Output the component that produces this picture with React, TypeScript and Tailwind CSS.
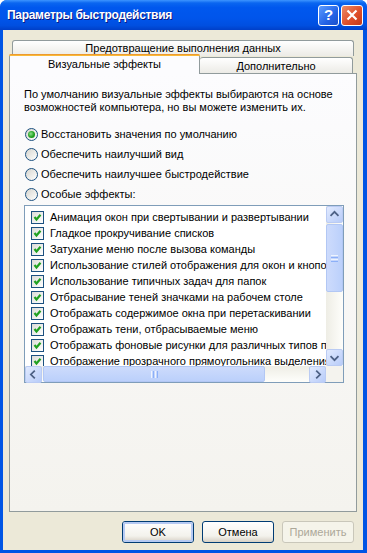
import React from 'react';

const items = [
  'Анимация окон при свертывании и развертывании',
  'Гладкое прокручивание списков',
  'Затухание меню после вызова команды',
  'Использование стилей отображения для окон и кнопок',
  'Использование типичных задач для папок',
  'Отбрасывание теней значками на рабочем столе',
  'Отображать содержимое окна при перетаскивании',
  'Отображать тени, отбрасываемые меню',
  'Отображать фоновые рисунки для различных типов папок',
  'Отображение прозрачного прямоугольника выделения',
];

const radios = [
  { label: 'Восстановить значения по умолчанию', checked: true },
  { label: 'Обеспечить наилучший вид', checked: false },
  { label: 'Обеспечить наилучшее быстродействие', checked: false },
  { label: 'Особые эффекты:', checked: false },
];

const CheckBox = () => (
  <span className="w-[13px] h-[13px] shrink-0 border border-[#1C5180] bg-[linear-gradient(135deg,#DCDCD7,#FFFFFF)] flex items-center justify-center">
    <svg width="11" height="11" viewBox="0 0 11 11">
      <path d="M2.5 5 L4.5 7.5 L8.5 2.8" stroke="#21A121" strokeWidth="2.2" fill="none" />
    </svg>
  </span>
);

const Radio = ({ checked }: { checked: boolean }) => (
  <span className="w-[13px] h-[13px] shrink-0 rounded-full border border-[#1C5180] bg-[linear-gradient(135deg,#D6D5CE,#FFFFFF)] flex items-center justify-center">
    {checked && (
      <span className="w-[7px] h-[7px] rounded-full bg-[radial-gradient(circle_at_40%_40%,#8BE08B,#21A121_55%,#1B8A1B)]" />
    )}
  </span>
);

const Chevron = ({ dir }: { dir: 'up' | 'down' | 'left' | 'right' }) => {
  const d = {
    up: 'M4 10 L8.5 5.5 L13 10',
    down: 'M4 7 L8.5 11.5 L13 7',
    left: 'M10 4 L5.5 8.5 L10 13',
    right: 'M7 4 L11.5 8.5 L7 13',
  }[dir];
  return (
    <svg width="17" height="17" viewBox="0 0 17 17">
      <path d={d} stroke="#4D6185" strokeWidth="2" fill="none" />
    </svg>
  );
};

const ArrowBtn = ({ dir }: { dir: 'up' | 'down' | 'left' | 'right' }) => (
  <div className="w-[17px] h-[17px] shrink-0 rounded-[2px] border border-[#BACBF3] bg-[linear-gradient(135deg,#E1EAFE,#B8CCF9)] flex items-center justify-center overflow-hidden">
    <Chevron dir={dir} />
  </div>
);

const VScroll = () => (
  <div className="w-[17px] flex flex-col bg-[linear-gradient(90deg,#EEEDE5,#FEFEFB)]">
    <ArrowBtn dir="up" />
    <div className="flex-1 pt-[1px]">
      <div className="h-[68px] rounded-[2px] border border-[#B2C7F4] bg-[linear-gradient(90deg,#CDDBFC,#BBD0FB)] flex flex-col items-center justify-center gap-[1px]">
        <span className="w-[7px] h-[1px] bg-[#EEF4FE]" />
        <span className="w-[7px] h-[1px] bg-[#8CB0F8]" />
        <span className="w-[7px] h-[1px] bg-[#EEF4FE]" />
        <span className="w-[7px] h-[1px] bg-[#8CB0F8]" />
      </div>
    </div>
    <ArrowBtn dir="down" />
  </div>
);

const HScroll = () => (
  <div className="flex-1 flex bg-[linear-gradient(180deg,#EEEDE5,#FEFEFB)]">
    <ArrowBtn dir="left" />
    <div className="flex-1 pl-[1px]">
      <div className="w-[222px] h-[16px] rounded-[2px] border border-[#B2C7F4] bg-[linear-gradient(180deg,#CDDBFC,#BBD0FB)] flex items-center justify-center gap-[1px]">
        <span className="h-[7px] w-[1px] bg-[#EEF4FE]" />
        <span className="h-[7px] w-[1px] bg-[#8CB0F8]" />
        <span className="h-[7px] w-[1px] bg-[#EEF4FE]" />
        <span className="h-[7px] w-[1px] bg-[#8CB0F8]" />
      </div>
    </div>
    <ArrowBtn dir="right" />
  </div>
);

const Button = ({ label, primary, disabled }: { label: string; primary?: boolean; disabled?: boolean }) =>
  disabled ? (
    <div className="w-[72px] h-[22px] rounded-[3px] border border-[#C9C7BA] bg-[#F5F4EA] flex items-center justify-center text-[#ACA899]">
      {label}
    </div>
  ) : (
    <div className="w-[72px] h-[22px] rounded-[3px] border border-[#003C74] bg-[linear-gradient(180deg,#FFFFFF,#F3F2EC_70%,#D6D0C5)] flex items-center justify-center">
      <div className={`w-full h-full rounded-[2px] flex items-center justify-center ${primary ? 'border-2 border-[#B6CAF3]' : ''}`}>
        {label}
      </div>
    </div>
  );

export default function App() {
  return (
    <div className="w-[367px] h-[553px] flex flex-col bg-[#0055E5] rounded-t-[7px] overflow-hidden font-['Liberation_Sans',Arial,sans-serif] text-[11px] text-black">
      {/* title bar */}
      <div className="h-[30px] shrink-0 flex items-center pl-[7px] pr-[4px] bg-[linear-gradient(180deg,#3D95FF_0%,#0A66F0_10%,#0058EE_25%,#0055EB_60%,#004FE0_85%,#003FC8_100%)]">
        <span className="flex-1 text-white font-bold text-[12px] tracking-[-0.3px] [text-shadow:1px_1px_#0A1883]">Параметры быстродействия</span>
        <div className="w-[21px] h-[21px] rounded-[3px] border border-white bg-[linear-gradient(135deg,#5C9CFF,#2463E6_60%,#1A4FCB)] flex items-center justify-center text-white font-bold text-[15px]">
          ?
        </div>
        <div className="ml-[2px] w-[22px] h-[21px] rounded-[3px] border border-white bg-[linear-gradient(135deg,#EA8C6A,#E0502B_55%,#C3391B)] flex items-center justify-center">
          <svg width="12" height="12" viewBox="0 0 12 12">
            <path d="M1.5 1.5 L10.5 10.5 M10.5 1.5 L1.5 10.5" stroke="white" strokeWidth="2.2" />
          </svg>
        </div>
      </div>

      {/* body */}
      <div className="ml-[3px] mr-[4px] mb-[3px] flex-1 bg-[#ECE9D8] flex flex-col pt-[10px]">
        <div className="ml-[6px] w-[348px] flex flex-col">
          {/* tab rows */}
          <div className="mx-[3px] h-[16px] rounded-t-[3px] border border-b-0 border-[#919B9C] bg-[linear-gradient(180deg,#FFFFFF,#ECEBE6)] flex items-center justify-center">
            Предотвращение выполнения данных
          </div>
          <div className="-mt-[2px] h-[19px] flex items-end">
            <div className="relative z-10 -mb-[1px] w-[191px] h-[20px] rounded-t-[3px] border-x border-[#919B9C] bg-[#FCFCFE] flex flex-col">
              <div className="h-[3px] -mx-[1px] rounded-t-[3px] bg-[linear-gradient(180deg,#E68B2C,#FFC83C)]" />
              <div className="flex-1 flex items-center justify-center pb-[2px]">Визуальные эффекты</div>
            </div>
            <div className="w-[153px] h-[16px] rounded-t-[3px] border border-b-0 border-l-0 border-[#919B9C] bg-[linear-gradient(180deg,#FFFFFF,#ECEBE6)] flex items-center justify-center pt-[1px]">
              Дополнительно
            </div>
          </div>

          {/* panel */}
          <div className="h-[439px] border border-[#919B9C] bg-[linear-gradient(180deg,#FCFCFE,#F4F3EE)] pt-[14px] pl-[14px]">
            <p className="leading-[13px]">
              По умолчанию визуальные эффекты выбираются на основе
              <br />
              возможностей компьютера, но вы можете изменить их.
            </p>
            <div className="mt-[10px] flex flex-col">
              {radios.map((r) => (
                <div key={r.label} className="h-[20px] flex items-center gap-[3px] pl-[1px]">
                  <Radio checked={r.checked} />
                  <span>{r.label}</span>
                </div>
              ))}
            </div>

            {/* list box */}
            <div className="mt-[1px] w-[320px] h-[178px] border border-[#7F9DB9] bg-white flex flex-col">
              <div className="flex flex-1 min-h-0">
                <div className="flex-1 overflow-hidden pt-[3px] pl-[6px]">
                  {items.map((t) => (
                    <div key={t} className="h-[16px] flex items-center gap-[6px] whitespace-nowrap">
                      <CheckBox />
                      <span>{t}</span>
                    </div>
                  ))}
                </div>
                <VScroll />
              </div>
              <div className="h-[16px] flex">
                <HScroll />
                <div className="w-[17px] bg-[#F4F3EE]" />
              </div>
            </div>
          </div>
        </div>

        {/* buttons */}
        <div className="mt-[9px] flex gap-[8px] pl-[119px]">
          <Button label="OK" primary />
          <Button label="Отмена" />
          <Button label="Применить" disabled />
        </div>
      </div>
    </div>
  );
}
